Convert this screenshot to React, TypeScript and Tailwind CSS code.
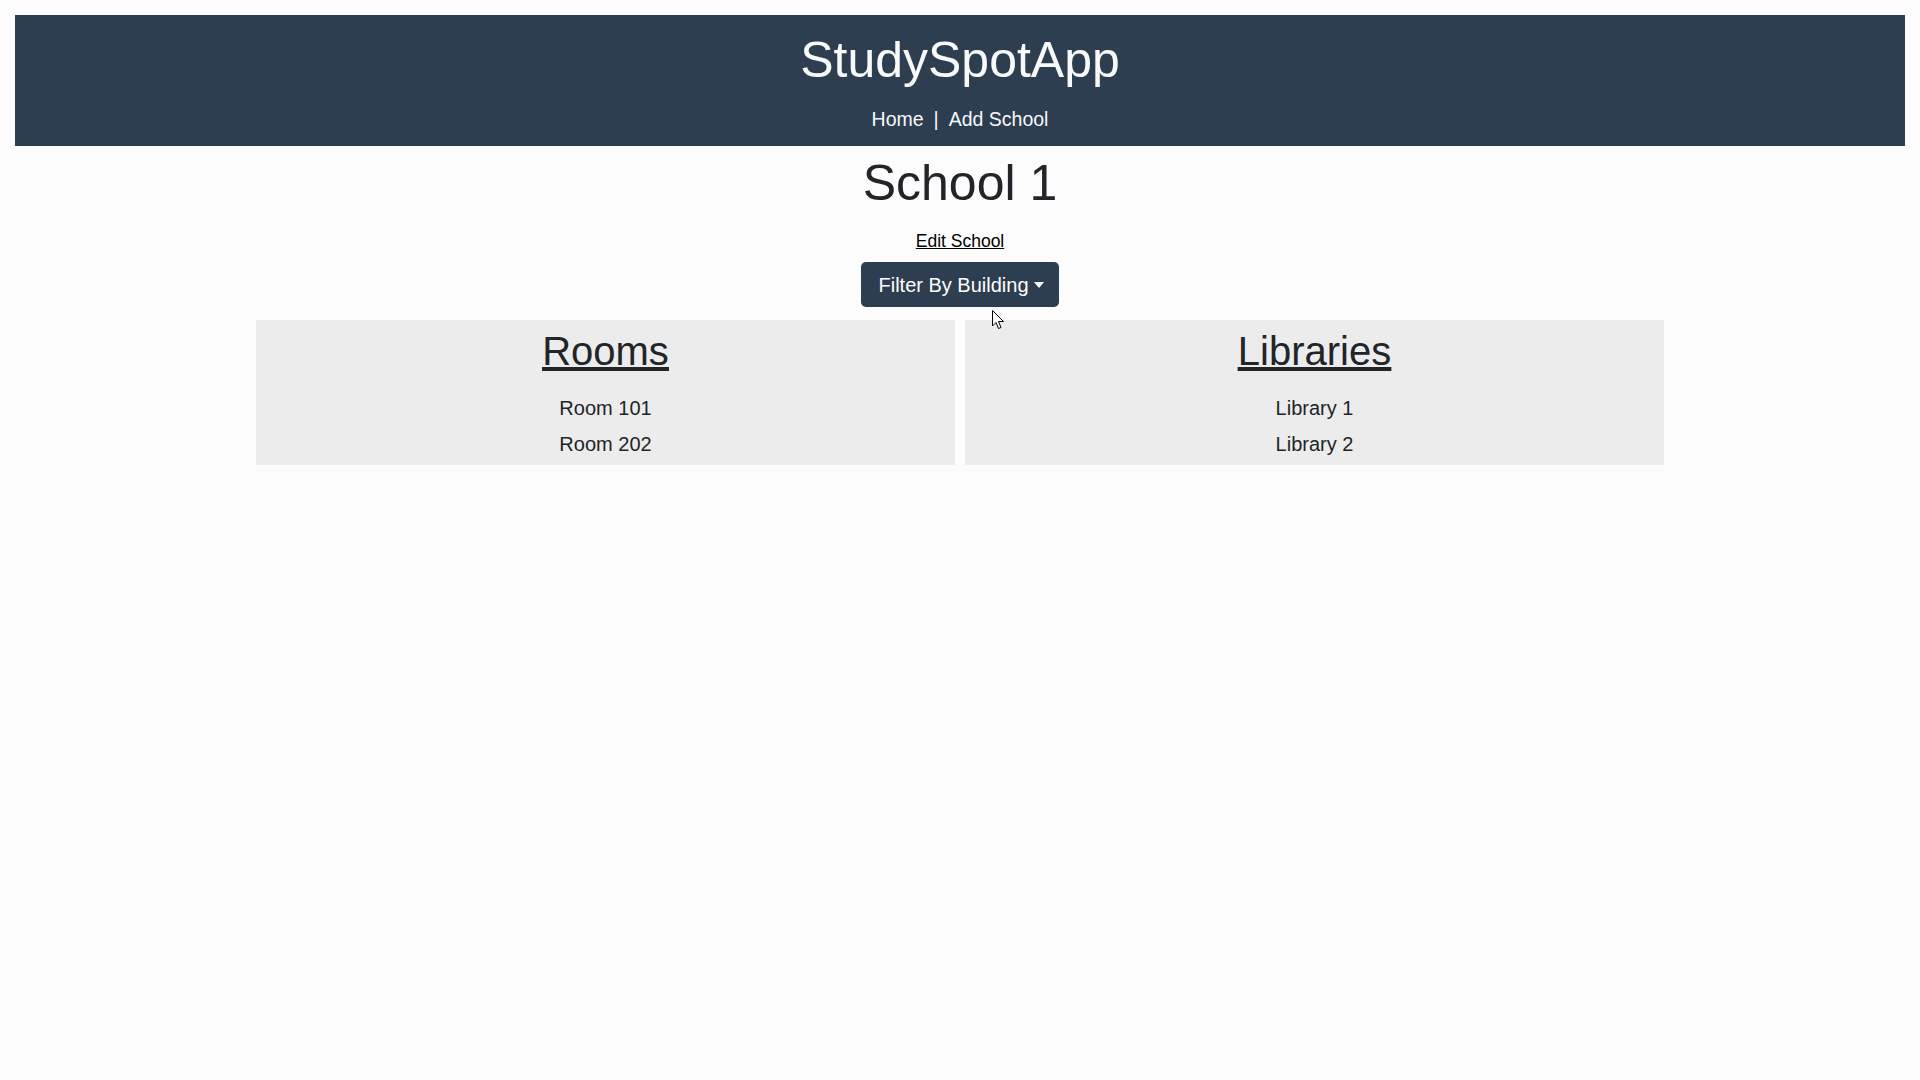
const rooms = ["Room 101", "Room 202"];
const libraries = ["Library 1", "Library 2"];

function Panel({ title, items }: { title: string; items: string[] }) {
  return (
    <section className="flex-1 bg-[#ececec] pt-[7px] pb-[3px] text-center text-[#212529]">
      <h2 className="text-[40px] leading-[48px] underline">
        <a href="#">{title}</a>
      </h2>
      <ul className="mt-[15px]">
        {items.map((item) => (
          <li key={item} className="text-[20px] leading-[36px]">
            {item}
          </li>
        ))}
      </ul>
    </section>
  );
}

export default function App() {
  return (
    <div
      className="relative min-h-screen bg-[#fcfcfc] pt-[15px]"
      style={{ fontFamily: '"Liberation Sans", Arial, sans-serif' }}
    >
      <header className="mx-[15px] bg-[#2c3e50] pt-[15px] pb-[15px] text-center text-[#f8f9fa]">
        <h1 className="text-[50px] leading-[60px]">StudySpotApp</h1>
        <nav className="mt-[17px] flex justify-center gap-[10px] text-[19.5px] leading-[24px]">
          <a href="#">Home</a>
          <span>|</span>
          <a href="#">Add School</a>
        </nav>
      </header>

      <main className="flex flex-col items-center pt-[8px]">
        <h1 className="text-[50px] leading-[58px] text-[#212529]">School 1</h1>
        <a href="#" className="mt-[17px] text-[17.5px] leading-[24px] text-black underline">
          Edit School
        </a>
        <button
          type="button"
          className="mt-[9px] flex h-[45px] items-center rounded-[5px] bg-[#2c3e50] pl-[17px] pr-[15px] text-[20px] text-white"
        >
          Filter By Building
          <span className="ml-[5px] mt-[1px] h-0 w-0 border-x-[5.5px] border-t-[6px] border-x-transparent border-t-white" />
        </button>

        <div className="mt-[13px] flex w-[1408px] gap-[10px]">
          <Panel title="Rooms" items={rooms} />
          <Panel title="Libraries" items={libraries} />
        </div>
      </main>

      {/* mouse pointer captured in the screenshot */}
      <svg
        className="absolute left-[992px] top-[310px]"
        width="13"
        height="20"
        viewBox="0 0 13 20"
      >
        <path
          d="M0.5 0.5 L0.5 16 L4 12.5 L6.5 18.5 L9 17.5 L6.5 11.5 L11.5 11.5 Z"
          fill="white"
          stroke="black"
          strokeWidth="1"
          strokeLinejoin="miter"
        />
      </svg>
    </div>
  );
}
